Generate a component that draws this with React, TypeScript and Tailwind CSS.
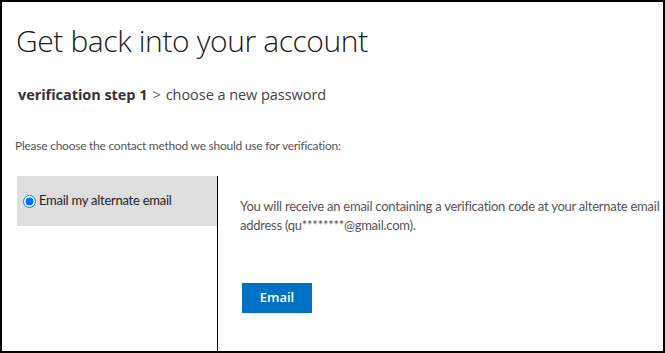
export default function App() {
  return (
    <div
      className="flex h-[353px] w-[665px] flex-col overflow-hidden border-2 border-black bg-white"
      style={{ fontFamily: '"Open Sans", "Noto Sans", sans-serif' }}
    >
      <h1 className="ml-[14px] mt-[21px] text-[30px] font-light leading-[36px] tracking-[-0.4px] text-[#1a1a1a]">
        Get back into your account
      </h1>

      <div className="ml-[16px] mt-[26px] text-[14.5px] leading-[20px] tracking-[-0.05px] text-[#444]">
        <span className="font-bold text-[#333]">verification step 1</span>
        <span className="mx-[5px] text-[#666]">&gt;</span>
        <span>choose a new password</span>
      </div>

      <div className="ml-[13px] mr-[6px] mt-[11px] h-px bg-[#a6a6a6]" />

      <div className="font-['Lato',sans-serif] tracking-[-0.25px]">
        <p className="ml-[13px] mt-[21px] text-[12px] leading-[18px] text-[#555]">
          Please choose the contact method we should use for verification:
        </p>

        <div className="ml-[15px] mt-[21px] flex h-[180px]">
          <div className="w-[200px]">
            <label className="flex h-[50px] items-center bg-[#dedede] pl-[6px] text-[13px] text-[#222]">
              <input type="radio" checked readOnly className="m-0 mr-[3px] h-[13px] w-[13px] accent-[#0075ff]" />
              Email my alternate email
            </label>
          </div>
          <div className="w-px bg-black" />
          <div className="flex-1 pl-[22px] pr-[2px] pt-[21px]">
            <p className="text-[13px] leading-[19px] text-[#555]">
              You will receive an email containing a verification code at your alternate email address (qu********@gmail.com).
            </p>
            <button className="ml-[2px] mt-[48px] h-[30px] w-[70px] bg-[#0072c6] font-['Open_Sans',sans-serif] text-[13px] font-semibold tracking-normal text-white">
              Email
            </button>
          </div>
        </div>
      </div>
    </div>
  )
}
